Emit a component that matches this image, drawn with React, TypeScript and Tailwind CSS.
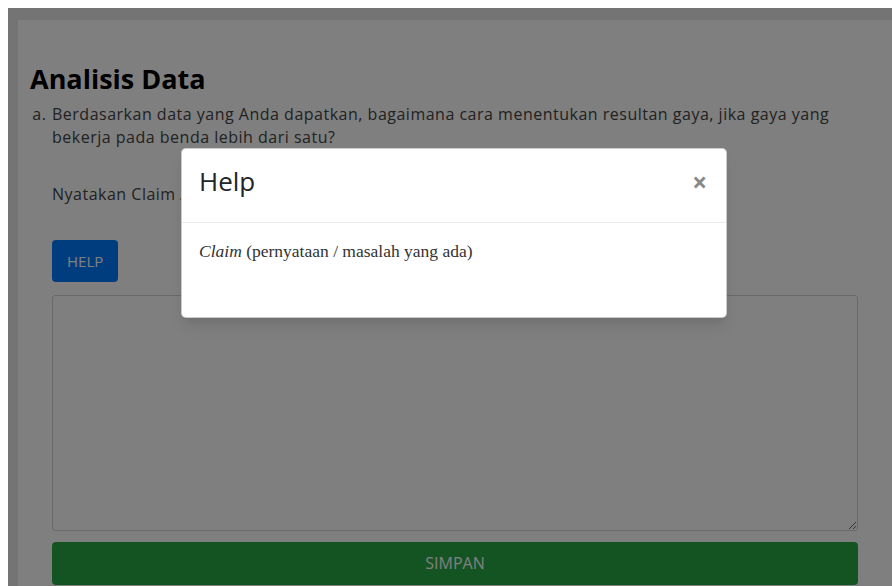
import React from 'react';

const sans = { fontFamily: '"Open Sans", "Liberation Sans", sans-serif' };

const HelpModal = () => (
  <div className="absolute inset-0 bg-black/50">
    <div className="ml-[173px] mt-[140px] w-[546px] rounded-[5px] border border-black/20 bg-white shadow-lg">
      <div className="flex h-[74px] items-center justify-between border-b border-[#e9ecef] pb-[8px] pl-[17px] pr-[19px]">
        <h5 className="text-[26px] font-normal text-[#212529]" style={sans}>Help</h5>
        <button className="text-[26px] font-bold leading-none text-[#888]" style={sans}>
          ×
        </button>
      </div>
      <div className="h-[94px] px-[17px] pt-[15px] text-[17.5px] text-[#333]" style={{ fontFamily: '"Liberation Serif", serif' }}>
        <em>Claim</em> (pernyataan / masalah yang ada)
      </div>
    </div>
  </div>
);

const App = () => {
  return (
    <div className="h-[586px] overflow-hidden bg-white pl-2 pt-2">
      <div className="relative h-[578px] bg-[#e9e9e9] pl-[10px] pt-3">
        <div className="h-full bg-white pl-3 pr-[34px] pt-[43px] text-[#333]" style={sans}>
          <h2 className="text-[27px] font-bold leading-[32px] text-black">Analisis Data</h2>
          <ol className="mt-[8px] list-[lower-alpha] pl-[21px] text-[16px] leading-[23px] tracking-[0.5px] text-[#444]">
            <li className="pl-[1px]">
              Berdasarkan data yang Anda dapatkan, bagaimana cara menentukan resultan gaya, jika gaya yang bekerja pada
              benda lebih dari satu?
              <p className="mt-[34px]">Nyatakan Claim Anda!</p>
              <button className="mt-[34px] h-[42px] rounded-[4px] bg-[#007bff] px-[15px] text-[15px] tracking-normal text-white">
                HELP
              </button>
              <textarea className="mt-[13px] block h-[236px] w-full rounded-[3px] border border-[#ced4da] bg-white" />
              <button className="mt-[11px] block h-[43px] w-full rounded-[4px] bg-[#28a745] text-[16px] tracking-normal text-white">
                SIMPAN
              </button>
            </li>
          </ol>
        </div>
        <HelpModal />
      </div>
    </div>
  );
};

export default App;
